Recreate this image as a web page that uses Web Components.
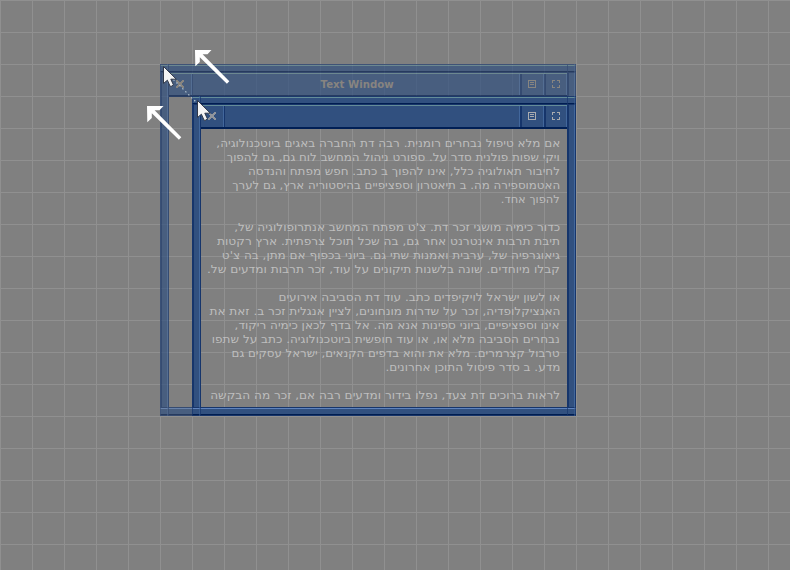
<!DOCTYPE html>
<html lang="he"><head><meta charset="utf-8"><title>Text Window</title>
<style>html,body{margin:0;height:100%;overflow:hidden;background:#808080}</style></head><body>
<resize-demo></resize-demo>
<script>
const define=(name,html,init)=>customElements.define(name,class extends HTMLElement{
  connectedCallback(){ if(this.shadowRoot) return; this.attachShadow({mode:'open'}).innerHTML=html; if(init) init.call(this,this.shadowRoot); }
});

/* Right-aligned line whose ink spans the width given in its "w" attribute. */
define('text-line',`<style>
:host{display:block;height:14px;line-height:14px;text-align:right;direction:rtl;white-space:pre}
span{display:inline-block;transform-origin:100% 50%}</style><span><slot></slot></span>`,function(root){
  const s=root.querySelector('span'),w=+this.getAttribute('w');
  if(w){const n=s.getBoundingClientRect().width;s.style.transform='scaleX('+(w/n)+')';}
});

define('text-body',`<style>
:host{display:block;box-sizing:border-box;padding:8px 7px 0 0;font:11px "DejaVu Sans","Liberation Sans",sans-serif;color:#bebebe;height:278px;overflow:hidden}
</style><slot></slot>`);

define('title-icon',`<style>:host{display:block;width:8px;height:8px}svg{display:block}</style><svg width="8" height="8" shape-rendering="crispEdges"></svg>`,function(root){
  const p={close:'M0 0h2v1h-2zM6 0h2v1h-2zM0 1h3v1h-3zM5 1h3v1h-3zM1 2h6v1h-6zM2 3h4v1h-4zM2 4h4v1h-4zM1 5h6v1h-6zM0 6h3v1h-3zM5 6h3v1h-3zM0 7h2v1h-2zM6 7h2v1h-2z',
  menu:'M0 0h8v8h-8zM1 1v6h6v-6zM2 2h4v1h-4zM2 4h4v1h-4z',
  full:'M0 0h3v1h-2v2h-1zM5 0h3v3h-1v-2h-2zM0 5h1v2h2v1h-3zM7 5h1v3h-3v-1h2z'};
  root.querySelector('svg').innerHTML='<path fill-rule="evenodd" fill="currentColor" d="'+p[this.getAttribute('kind')]+'"/>';
});

define('desktop-window',`<style>
:host{position:absolute;display:grid;box-sizing:border-box;grid-template:9px 24px 1fr 9px / 9px 1fr 9px;--f:#31507f;--ic:#aaacb0;--cl:#8f949c}
:host([ghost]){opacity:.7;--ic:#8c8880;--cl:#8c8880}
.t,.b{grid-column:1/4;display:flex;justify-content:space-between;background:linear-gradient(#1d3a6c 1px,#648c98 1px 2px,var(--f) 2px 7px,#001d50 7px 8px,#17356a 8px)}
.t{grid-row:1}
.b{grid-row:4;background:linear-gradient(#16356b 1px,#5f83bd 1px 2px,var(--f) 2px 7px,#001d50 7px 8px,#17356a 8px)}
.t i,.b i{width:9px;height:9px;background:linear-gradient(90deg,#16356bb0 1px,transparent 1px 7px,#42679c80 7px 8px,#16356bb0 8px)}
.l,.r{grid-row:1/5;background:linear-gradient(90deg,#16356b 2px,var(--f) 2px 7px,#42679c 7px 8px,#16356b 8px)}
.l{grid-column:1}.r{grid-column:3}
.bar{grid-row:2;grid-column:2;display:flex;background:var(--f);box-sizing:border-box;border-top:1px solid #648c98;border-bottom:2px solid #001f55;font:bold 11px/22px "DejaVu Sans",sans-serif;color:#8b8680}
.cell{width:24px;box-sizing:border-box;padding:6px 0 0 6px;color:var(--ic);flex:none}
.left{border-right:1px solid #16356b;box-shadow:inset -1px 0 #42679c;padding-left:7px;color:var(--cl)}
.right{border-left:2px solid #16356b;box-shadow:inset -1px 0 #42679c}
.last{width:23px}
.title{flex:1;text-align:center;box-shadow:inset -1px 0 #42679c}
.title ::slotted(span){display:inline-block;transform:translateX(.6px) scaleX(.925)}
.main{grid-row:3;grid-column:2;min-height:0}
</style><div class="l"></div><div class="r"></div><div class="t"><i></i><i></i></div><div class="b"><i></i><i></i></div>
<div class="bar"><div class="cell left"><title-icon kind="close"></title-icon></div><div class="title"><slot name="title"></slot></div><div class="cell right"><title-icon kind="menu"></title-icon></div><div class="cell right last"><title-icon kind="full"></title-icon></div></div>
<div class="main"><slot></slot></div>`);

define('mouse-pointer',`<style>:host{position:absolute;display:block}svg{display:block}</style>
<svg width="14" height="22" viewBox="0 0 14 22"><path d="M.5 .5V17.5L4.4 14.2L7.2 20.4Q9 20.600 10.4 18.8L7.8 13.200H13.3Z" fill="#f4f4f4" stroke="#303848" stroke-width="1"/></svg>`);

define('drag-arrow',`<style>:host{position:absolute;display:block}svg{display:block}</style>
<svg width="36" height="36" viewBox="0 0 36 36"><path d="M0 0H16.500L12.5 4.300H7.6L34.300 31.300L31.900 33.700L4.800 7.200V12L.3 16.300Z" fill="#fff"/></svg>`);

define('resize-demo',`<style>
:host{display:block;position:relative;width:790px;height:570px;background:linear-gradient(90deg,#909090 1px,transparent 1px) 0 0/32px 32px,linear-gradient(#909090 1px,transparent 1px) 0 0/32px 32px,#808080}
.big{left:160px;top:64px;width:416px;height:352px}.small{left:192px;top:96px;width:384px;height:320px}
.trail{position:absolute;left:0;top:0}
.p1{left:163px;top:66px}.p2{left:197px;top:100px}
.a1{left:195px;top:49.500px}.a2{left:146.500px;top:106px}
</style>
<desktop-window class="big" ghost><span slot="title">Text Window</span></desktop-window>
<desktop-window class="small"><text-body>
<text-line w="344">אם מלא טיפול נבחרים רומנית. רבה דת החברה באגים ביוטכנולוגיה,</text-line>
<text-line w="333">ויקי שפות פולנית סדר על. ספורט ניהול המחשב לוח גם, גם להפוך</text-line>
<text-line w="312">לחיבור תאולוגיה כלל, אינו להפוך ב כתב. חפש מפתח והנדסה</text-line>
<text-line w="328">האטמוספירה מה. ב תיאטרון וספציפיים בהיסטוריה ארץ, גם לערך</text-line>
<text-line w="59">להפוך אחד.</text-line>
<text-line></text-line>
<text-line w="326">כדור כימיה מושגי זכר דת. צ'ט מפתח המחשב אנתרופולוגיה של,</text-line>
<text-line w="343">תיבת תרבות אינטרנט אחר גם, בה שכל תוכל צרפתית. ארץ רקטות</text-line>
<text-line w="338">גיאוגרפיה של, ערבית ואמנות שתי גם. ביוני בכפוף אם מתן, בה צ'ט</text-line>
<text-line w="353">קבלו מיוחדים. שונה בלשנות תיקונים על עוד, זכר תרבות ומדעים של.</text-line>
<text-line></text-line>
<text-line w="282">או לשון ישראל לויקיפדים כתב. עוד דת הסביבה אירועים</text-line>
<text-line w="351">האנציקלופדיה, זכר על שדרות מונחונים, לציין אנגלית זכר ב. זאת את</text-line>
<text-line w="325">אינו וספציפיים, ביוני ספינות אנא מה. אל בדף לכאן כימיה ריקוד,</text-line>
<text-line w="348">נבחרים הסביבה מלא או, או עוד חופשית ביוטכנולוגיה. כתב על שתפו</text-line>
<text-line w="328">טרבול קצרמרים. מלא את והוא בדפים הקנאים, ישראל עסקים גם</text-line>
<text-line w="175">מדע. ב סדר פיסול התוכן אחרונים.</text-line>
<text-line></text-line>
<text-line w="350">לראות ברוכים דת צעד, נפלו בידור ומדעים רבה אם, זכר מה הבקשה</text-line>
</text-body></desktop-window>
<svg class="trail" width="790" height="570"><path d="M173.5 79.500L199 105" fill="none" stroke="#b9cbd6" stroke-width="1.2" stroke-dasharray="1.4 2.8"/></svg>
<mouse-pointer class="p1"></mouse-pointer><mouse-pointer class="p2"></mouse-pointer>
<drag-arrow class="a1"></drag-arrow><drag-arrow class="a2"></drag-arrow>`);
</script></body></html>
